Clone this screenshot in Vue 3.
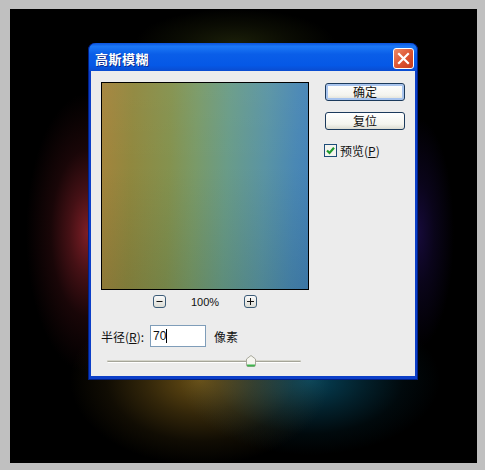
<script setup>
const radius = 70
</script>

<template>
  <div class="page">
    <div class="canvas">
      <div class="dialog">
        <header class="titlebar">
          <span class="title">高斯模糊</span>
          <button class="close" aria-label="关闭">
            <svg width="13" height="13" viewBox="0 0 13 13"><path d="M2 2 L11 11 M11 2 L2 11" stroke="#fff" stroke-width="2.2" stroke-linecap="square" fill="none"/></svg>
          </button>
        </header>
        <div class="body">
          <div class="main">
            <div class="left">
              <div class="preview"></div>
              <div class="zoom">
                <button class="zbtn"><svg width="9" height="9" viewBox="0 0 9 9"><path d="M1.5 4.5H7.5" stroke="#111" stroke-width="1"/></svg></button>
                <span class="pct">100%</span>
                <button class="zbtn"><svg width="9" height="9" viewBox="0 0 9 9"><path d="M1 4.5H8M4.5 1V8" stroke="#111" stroke-width="1"/></svg></button>
              </div>
            </div>
            <div class="right">
              <button class="btn primary">确定</button>
              <button class="btn">复位</button>
              <label class="check">
                <span class="box"><svg width="11" height="11" viewBox="0 0 11 11"><path d="M2 5.5 L4.5 8 L9 2.8" stroke="#1f9a2c" stroke-width="2.2" fill="none"/></svg></span>
                <span>预览(<u>P</u>)</span>
              </label>
            </div>
          </div>
          <div class="radius">
            <span class="label">半径(<u>R</u>):</span>
            <div class="input"><span class="val">{{ radius }}</span><i class="caret"></i></div>
            <span>像素</span>
          </div>
          <div class="slider">
            <div class="track"></div>
            <svg class="thumb" width="10" height="12" viewBox="0 0 10 12">
              <path d="M5 .5 L9.5 4 V10 Q9.5 11.5 8 11.5 H2 Q.5 11.5 .5 10 V4 Z" fill="#f6f6f0" stroke="#a8a89c"/>
              <path d="M1 9.5 H9 V10.5 Q9 11.5 8 11.5 H2 Q1 11.5 1 10.5 Z" fill="#3fb34f"/>
            </svg>
          </div>
        </div>
      </div>
    </div>
  </div>
</template>

<style>
html, body { margin: 0; background: #c0c0c0; }
</style>

<style scoped>
.page {
  width: 485px;
  height: 470px;
  box-sizing: border-box;
  padding: 9px 8px 7px 10px;
  background: #c0c0c0;
  font-family: "Noto Sans CJK SC", "Liberation Sans", sans-serif;
  font-size: 12px;
  color: #111;
  overflow: hidden;
}
.canvas {
  height: 100%;
  box-sizing: border-box;
  padding: 34px 59px 83px 78px;
  background:
    radial-gradient(ellipse 62px 140px at 78px 224px, rgba(125, 30, 38, 1), rgba(125, 30, 38, .55) 30%, rgba(125, 30, 38, .2) 60%, rgba(125, 30, 38, 0) 100%),
    radial-gradient(ellipse 36px 115px at 408px 224px, rgba(22, 10, 58, 1), rgba(22, 10, 58, .45) 45%, rgba(22, 10, 58, 0) 100%),
    radial-gradient(ellipse 130px 85px at 190px 371px, rgba(104, 78, 20, 1), rgba(104, 78, 20, .48) 42%, rgba(104, 78, 20, .16) 72%, rgba(104, 78, 20, 0) 100%),
    radial-gradient(ellipse 130px 75px at 300px 371px, rgba(6, 66, 88, 1), rgba(6, 66, 88, .48) 42%, rgba(6, 66, 88, .14) 72%, rgba(6, 66, 88, 0) 100%),
    radial-gradient(ellipse 100px 34px at 225px 34px, rgba(26, 30, 8, 1), rgba(26, 30, 8, .4) 55%, rgba(26, 30, 8, 0) 100%),
    #000;
  background-blend-mode: screen, screen, screen, screen, screen, normal;
}
.dialog {
  width: 330px;
  height: 337px;
  box-sizing: border-box;
  display: flex;
  flex-direction: column;
  border-radius: 7px 7px 0 0;
  background: #0c3fc8;
  padding: 0 3px 4px;
  box-shadow: inset 0 0 0 1px #001f86;
}
.titlebar {
  height: 28px;
  margin: 0 -2px;
  padding: 2px 3px 0 6px;
  box-sizing: border-box;
  flex: none;
  display: flex;
  align-items: center;
  justify-content: space-between;
  border-radius: 7px 7px 0 0;
  background: linear-gradient(#0a52dc 0, #1c78f6 12%, #0a5ee8 40%, #0558e6 80%, #0a4cd0 100%);
}
.title {
  color: #fff;
  font-weight: 700;
  font-size: 13px;
  letter-spacing: .5px;
  text-shadow: 1px 1px 0 #0a2a90;
}
.close {
  width: 21px;
  height: 21px;
  padding: 0;
  display: flex;
  align-items: center;
  justify-content: center;
  border: 1px solid #fff;
  border-radius: 3px;
  background: linear-gradient(135deg, #ee8a66, #dc5230 55%, #c63c1c);
}
.body {
  flex: 1;
  background: #ececec;
  padding: 11px 0 0 10px;
  display: flex;
  flex-direction: column;
}
.main {
  display: flex;
  gap: 16px;
}
.left {
  display: flex;
  flex-direction: column;
  align-items: center;
  width: 208px;
}
.preview {
  width: 206px;
  height: 206px;
  border: 1px solid #000;
  background:
    linear-gradient(rgba(255, 255, 255, .03), rgba(0, 0, 0, 0) 40%, rgba(0, 30, 20, .12) 100%),
    linear-gradient(92deg, #a5843c 0, #90883f 15%, #84924f 33%, #7a9a68 45%, #6a9c88 60%, #5a94a4 78%, #4a88b4 92%, #4482b8 100%);
}
.zoom {
  display: flex;
  align-items: center;
  justify-content: center;
  gap: 25px;
  margin-top: 5px;
  height: 13px;
}
.zbtn {
  width: 13px;
  height: 13px;
  padding: 0;
  display: flex;
  align-items: center;
  justify-content: center;
  border: 1px solid #3c5c78;
  border-radius: 3px;
  background: linear-gradient(#fafafa, #dcdcd4);
}
.pct {
  font-family: "Liberation Sans", sans-serif;
  font-size: 11px;
}
.right {
  display: flex;
  flex-direction: column;
  padding-top: 1px;
  width: 80px;
}
.btn {
  width: 80px;
  height: 18px;
  padding: 0;
  font: inherit;
  color: #111;
  line-height: 1;
  border: 1px solid #1c3a5c;
  border-radius: 3px;
  background: linear-gradient(#fff, #f4f4ee 70%, #dcdcd2);
  margin-bottom: 11px;
}
.btn.primary {
  box-shadow: inset 0 0 0 2px #a8c4ee;
}
.check {
  display: flex;
  align-items: center;
  gap: 3px;
  margin-top: 1px;
  margin-left: -1px;
}
.box {
  width: 11px;
  height: 11px;
  display: flex;
  align-items: center;
  justify-content: center;
  border: 1px solid #1c4c78;
  background: #f4f4ee;
}
.radius {
  display: flex;
  align-items: center;
  margin-top: 17px;
  height: 22px;
}
.label {
  width: 49px;
}
.input {
  width: 52px;
  height: 20px;
  margin-right: 8px;
  padding-left: 2px;
  display: flex;
  align-items: center;
  background: #fff;
  border: 1px solid #7f9db9;
}
.val {
  font-family: "Liberation Sans", sans-serif;
  font-size: 12px;
}
.caret {
  width: 1px;
  height: 14px;
  background: #000;
}
.slider {
  position: relative;
  margin: 13px 0 0 6px;
  width: 194px;
  height: 3px;
}
.track {
  height: 1px;
  background: #a5a599;
  border-bottom: 1px solid #fff;
  border-top: 1px solid #d4d4ca;
  border-radius: 2px;
}
.thumb {
  position: absolute;
  left: 139px;
  top: -5px;
}
</style>
